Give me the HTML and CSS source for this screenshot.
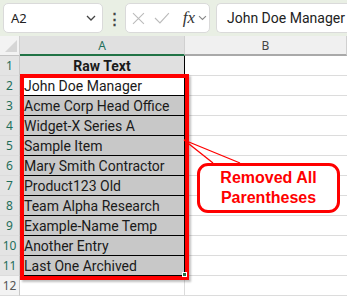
FILE: index.html
```html
<!DOCTYPE html>
<html lang="en">
<head>
    <meta charset="UTF-8">
    <title>Raw Text</title>
    <link rel="stylesheet" href="styles.css">
</head>
<body>
    <div class="formula-bar">
        <div class="name-box">
            <span>A2</span>
            <svg class="chev" width="10" height="6" viewBox="0 0 10 6"><path d="M1 1l4 4 4-4" fill="none" stroke="#444" stroke-width="1.3"/></svg>
        </div>
        <div class="dots">⋮</div>
        <div class="fx-box">
            <svg width="13" height="13" viewBox="0 0 13 13"><path d="M1 1l11 11M12 1L1 12" stroke="#bbb" stroke-width="1.1"/></svg>
            <svg width="16" height="13" viewBox="0 0 16 13"><path d="M1 6l5 5 9-10" fill="none" stroke="#bbb" stroke-width="1.1"/></svg>
            <span class="fx">fx</span>
            <svg class="chev" width="9" height="6" viewBox="0 0 9 6"><path d="M1 1l3.5 3.5L8 1" fill="none" stroke="#888" stroke-width="1.1"/></svg>
        </div>
        <div class="formula-input">John Doe Manager</div>
    </div>

    <div class="sheet">
        <div class="grid">
            <div class="corner"><svg width="12" height="12" viewBox="0 0 12 12"><path d="M12 0v12H0z" fill="#d6d6d6"/></svg></div>
            <div class="col-head selected">A</div>
            <div class="col-head">B</div>

            <div class="row-num sel">1</div>
            <div class="cell head">Raw Text</div>
            <div class="cell b"></div>

            <div class="row-num sel">2</div>
            <div class="cell">John Doe Manager</div>
            <div class="cell b"></div>

            <div class="row-num sel">3</div>
            <div class="cell grey">Acme Corp Head Office</div>
            <div class="cell b"></div>

            <div class="row-num sel">4</div>
            <div class="cell grey">Widget-X Series A</div>
            <div class="cell b"></div>

            <div class="row-num sel">5</div>
            <div class="cell grey">Sample Item</div>
            <div class="cell b"></div>

            <div class="row-num sel">6</div>
            <div class="cell grey">Mary Smith Contractor</div>
            <div class="cell b"></div>

            <div class="row-num sel">7</div>
            <div class="cell grey">Product123 Old</div>
            <div class="cell b"></div>

            <div class="row-num sel">8</div>
            <div class="cell grey">Team Alpha Research</div>
            <div class="cell b"></div>

            <div class="row-num sel">9</div>
            <div class="cell grey">Example-Name Temp</div>
            <div class="cell b"></div>

            <div class="row-num sel">10</div>
            <div class="cell grey">Another Entry</div>
            <div class="cell b"></div>

            <div class="row-num sel">11</div>
            <div class="cell grey last">Last One Archived</div>
            <div class="cell b"></div>

            <div class="row-num">12</div>
            <div class="cell empty"></div>
            <div class="cell b"></div>
        </div>

        <div class="red-frame"></div>
        <div class="handle"></div>

        <svg class="pointer" width="347" height="296" viewBox="0 0 347 296">
            <path d="M184 140L213 163M184 140L240 163" stroke="#f00" stroke-width="1.3" fill="none"/>
        </svg>
        <div class="callout">Removed All<br>Parentheses</div>
    </div>
</body>
</html>
```

FILE: styles.css
```css
* {
    margin: 0;
    padding: 0;
    box-sizing: border-box;
}

body {
    width: 347px;
    height: 296px;
    overflow: hidden;
    background: #fff;
    font-family: "Noto Sans", "Open Sans", sans-serif;
    position: relative;
}

.formula-bar {
    height: 36px;
    background-color: #e9efe4;
    display: flex;
    align-items: center;
    padding: 0 0 0 3px;
}

.name-box {
    width: 100px;
    height: 30px;
    background: #fff;
    border: 1px solid #dadada;
    border-radius: 5px;
    display: flex;
    align-items: center;
    justify-content: space-between;
    padding: 0 6px 0 7px;
    font-size: 13px;
    color: #222;
}

.dots {
    width: 22px;
    text-align: center;
    font-size: 15px;
    font-weight: bold;
    color: #444;
}

.fx-box {
    width: 85px;
    height: 30px;
    background: #fff;
    border: 1px solid #dadada;
    border-radius: 5px;
    display: flex;
    align-items: center;
    gap: 9px;
    padding: 0 2px 0 6px;
}

.fx {
    font-family: "Liberation Serif", serif;
    font-style: italic;
    font-size: 17px;
    color: #333;
    margin-left: 4px;
    margin-right: -6px;
}

.formula-input {
    flex: 1;
    height: 30px;
    margin-left: 6px;
    background: #fff;
    border: 1px solid #dadada;
    border-right: none;
    border-radius: 5px 0 0 5px;
    padding-left: 10px;
    display: flex;
    align-items: center;
    font-family: Roboto, "Noto Sans", sans-serif;
    font-size: 14px;
    color: #222;
    white-space: nowrap;
    overflow: hidden;
}

.sheet {
    position: relative;
}

.grid {
    display: grid;
    grid-template-columns: 20px 165px 162px;
    grid-template-rows: repeat(13, 20px);
}

.corner {
    background: #f3f3f3;
    border-right: 1px solid #d0d0d0;
    border-bottom: 1px solid #c4c4c4;
    display: flex;
    align-items: flex-end;
    justify-content: flex-end;
    padding: 0 2px 3px 0;
}

.col-head {
    background: #f0f0f0;
    border-bottom: 2px solid #a9a9a9;
    border-right: 1px solid #d0d0d0;
    font-size: 12px;
    color: #444;
    display: flex;
    align-items: center;
    justify-content: center;
}

.col-head.selected {
    background: #e0e0e0;
    border-bottom: 2px solid #217346;
    color: #1e6e5a;
}

.row-num {
    background: #f3f3f3;
    border-right: 1px solid #c8c8c8;
    border-bottom: 1px solid #dcdcdc;
    font-size: 12px;
    color: #555;
    display: flex;
    align-items: center;
    justify-content: center;
}

.row-num.sel {
    background: #e4e4e4;
    color: #1e6e5a;
}

.cell {
    font-family: Roboto, "Noto Sans", sans-serif;
    font-size: 14px;
    color: #1a1a1a;
    display: flex;
    align-items: center;
    padding-left: 4px;
    border-right: 1px solid #000;
    border-bottom: 1px solid #000;
    white-space: nowrap;
}

.cell.head {
    background: #e0e0e0;
    justify-content: center;
    font-weight: bold;
    padding-left: 0;
}

.cell.grey {
    background: #c8c8c8;
}

.cell.empty {
    border-bottom: 1px solid #dcdcdc;
    border-right: 1px solid #dcdcdc;
}

.cell.b {
    border-right: none;
    border-bottom: 1px solid #dcdcdc;
}

.red-frame {
    position: absolute;
    left: 20px;
    top: 38px;
    width: 169px;
    height: 206px;
    border: 4px solid #f00;
    box-shadow: 2px 2px 2px rgba(0, 0, 0, 0.25);
}

.handle {
    position: absolute;
    left: 182px;
    top: 236px;
    width: 5px;
    height: 5px;
    background: #217346;
    border: 1px solid #fff;
}

.pointer {
    position: absolute;
    left: 0;
    top: -36px;
}

.callout {
    position: absolute;
    left: 197px;
    top: 127px;
    width: 143px;
    height: 50px;
    border: 3px solid #f00;
    border-radius: 11px;
    background: #fff;
    color: #f00;
    font-family: "Liberation Sans", sans-serif;
    font-weight: bold;
    font-size: 16px;
    line-height: 20px;
    text-align: center;
    padding-top: 2px;
}
```
